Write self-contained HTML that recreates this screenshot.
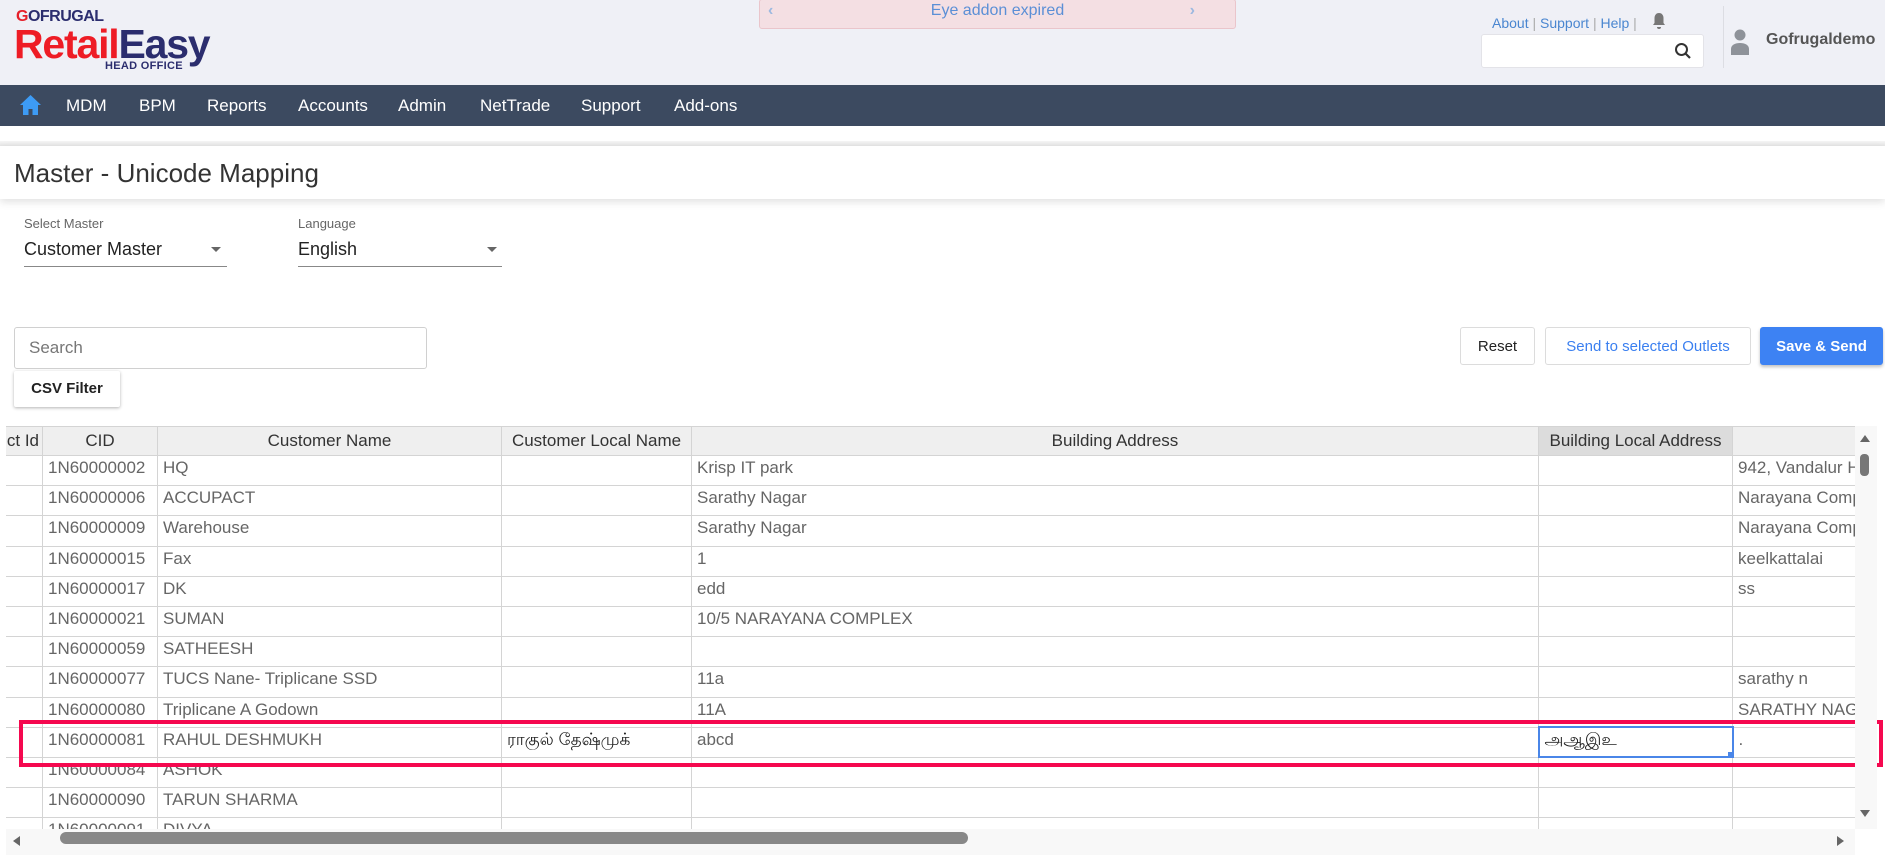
<!DOCTYPE html>
<html><head><meta charset="utf-8">
<style>
*{margin:0;padding:0;box-sizing:border-box}
body{width:1885px;height:855px;overflow:hidden;background:#fff;font-family:"Liberation Sans",sans-serif;position:relative;color:#333}
.abs{position:absolute}
#hdr{left:0;top:0;width:1885px;height:85px;background:#eff0f6}
#nav{left:0;top:85px;width:1885px;height:41px;background:#3c4a60}
.nv{position:absolute;top:96px;color:#fff;font-size:17px}
.tbl{position:absolute;left:6px;top:426px;width:1849px;height:403px;overflow:hidden}
table{border-collapse:collapse;table-layout:fixed;position:absolute;left:-30px;top:0;width:1916px}
td,th{border:1px solid #d4d4d4;height:30.2px;font-size:17px;color:#666;font-weight:normal;white-space:nowrap;overflow:hidden;padding:2px 5px 0 5px;vertical-align:top;text-align:left}
th{background:#efefef;color:#333;text-align:center;vertical-align:middle;height:29px;padding:0 4px}
.btn{position:absolute;top:327px;height:38px;border:1px solid #dcdcdc;border-radius:3px;background:#fff;font-size:15px;display:flex;align-items:center;justify-content:center}
</style></head><body>
<div id="hdr" class="abs"></div>
<div class="abs" style="left:16px;top:8px;font-size:16px;color:#2b2d6e;letter-spacing:-0.5px;font-weight:bold"><span style="color:#e5202a">G</span>OFRUGAL</div>
<div class="abs" style="left:14px;top:22px;font-size:41px;font-weight:bold;letter-spacing:-1.2px;line-height:44px"><span style="color:#ee1c25">Retail</span><span style="color:#2b2d6e">Easy</span></div>
<div class="abs" style="left:105px;top:60px;font-size:11px;font-weight:bold;color:#2b2d6e;letter-spacing:0.3px">HEAD OFFICE</div>
<div class="abs" style="left:759px;top:-1px;width:477px;height:30px;background:#f4dfe3;border:1px solid #eac5cb;border-radius:3px;text-align:center;font-size:16px;color:#5b8fd6;line-height:22px">Eye addon expired
<span class="abs" style="left:8px;top:0;color:#9bb8e0;font-weight:bold">&#8249;</span><span class="abs" style="right:40px;top:0;color:#9bb8e0;font-weight:bold">&#8250;</span></div>
<div class="abs" style="left:1492px;top:15px;font-size:14px;color:#4a86d0">About <span style="color:#aaa">|</span> Support <span style="color:#aaa">|</span> Help <span style="color:#aaa">|</span></div>
<svg class="abs" style="left:1652px;top:12px" width="14" height="18" viewBox="0 0 14 18"><path d="M7 1c-3 0-4.5 2.5-4.5 5v5L1 13h12l-1.5-2V6C11.5 3.5 10 1 7 1z M5 15a2 2 0 0 0 4 0z" fill="#777"/></svg>
<div class="abs" style="left:1481px;top:34px;width:223px;height:34px;background:#fff;border:1px solid #e3e3e8;border-radius:3px"></div>
<svg class="abs" style="left:1674px;top:42px" width="18" height="18" viewBox="0 0 18 18"><circle cx="7.5" cy="7.5" r="5.5" stroke="#333" stroke-width="2" fill="none"/><path d="M11.5 11.5L16 16" stroke="#333" stroke-width="2.2"/></svg>
<div class="abs" style="left:1723px;top:6px;width:1px;height:62px;background:#dcdde3"></div>
<svg class="abs" style="left:1730px;top:28px" width="20" height="28" viewBox="0 0 20 28"><circle cx="10" cy="7" r="5.5" fill="#8e9299"/><path d="M1 27v-6c0-4 4-6 9-6s9 2 9 6v6z" fill="#8e9299"/></svg>
<div class="abs" style="left:1766px;top:31px;font-size:16px;font-weight:bold;color:#555">Gofrugaldemo</div>

<div id="nav" class="abs"></div>
<svg class="abs" style="left:19px;top:94px" width="23" height="22" viewBox="0 0 23 22"><path d="M11.5 1L1 11h3v10h5.5v-6h4v6H19V11h3z" fill="#3d9bf5"/></svg>
<div class="nv" style="left:66px">MDM</div>
<div class="nv" style="left:139px">BPM</div>
<div class="nv" style="left:207px">Reports</div>
<div class="nv" style="left:298px">Accounts</div>
<div class="nv" style="left:398px">Admin</div>
<div class="nv" style="left:480px">NetTrade</div>
<div class="nv" style="left:581px">Support</div>
<div class="nv" style="left:674px">Add-ons</div>

<div class="abs" style="left:0;top:141px;width:1885px;height:6px;background:linear-gradient(#f5f5f5,#e3e3e3)"></div>
<div class="abs" style="left:0;top:146px;width:1885px;height:53px;background:#fff;box-shadow:0 3px 8px rgba(0,0,0,0.12)"></div>
<div class="abs" style="left:14px;top:158px;font-size:26px;color:#333">Master - Unicode Mapping</div>

<div class="abs" style="left:24px;top:216px;font-size:13px;color:#666">Select Master</div>
<div class="abs" style="left:24px;top:239px;font-size:18px;color:#222">Customer Master</div>
<div class="abs" style="left:211px;top:247px;border-left:5px solid transparent;border-right:5px solid transparent;border-top:5px solid #666"></div>
<div class="abs" style="left:24px;top:266px;width:203px;height:1px;background:#888"></div>
<div class="abs" style="left:298px;top:216px;font-size:13px;color:#666">Language</div>
<div class="abs" style="left:298px;top:239px;font-size:18px;color:#222">English</div>
<div class="abs" style="left:487px;top:247px;border-left:5px solid transparent;border-right:5px solid transparent;border-top:5px solid #666"></div>
<div class="abs" style="left:298px;top:266px;width:204px;height:1px;background:#888"></div>

<div class="abs" style="left:14px;top:327px;width:413px;height:42px;border:1px solid #d0d0d0;border-radius:3px;background:#fff;font-size:17px;color:#777;padding:10px 14px">Search</div>
<div class="abs" style="left:14px;top:371px;width:106px;height:36px;background:#fff;box-shadow:0 1px 3px rgba(0,0,0,0.3);border-radius:2px;font-size:15px;font-weight:bold;color:#222;text-align:center;line-height:36px">CSV Filter</div>

<div class="btn" style="left:1460px;width:75px;color:#222">Reset</div>
<div class="btn" style="left:1545px;width:206px;color:#3a7ff0">Send to selected Outlets</div>
<div class="btn" style="left:1760px;width:123px;background:#3d82f3;border-color:#3d82f3;color:#fff;font-weight:bold;box-shadow:0 2px 3px rgba(0,0,0,0.25)">Save &amp; Send</div>

<div class="tbl">
<table>
<colgroup><col style="width:66px"><col style="width:115px"><col style="width:344px"><col style="width:190px"><col style="width:847px"><col style="width:194px"><col style="width:160px"></colgroup>
<tr><th style="text-align:right;padding-right:3px">ct Id</th><th>CID</th><th>Customer Name</th><th>Customer Local Name</th><th>Building Address</th><th style="background:#dcdcdc">Building Local Address</th><th></th></tr>
<tr><td></td><td>1N60000002</td><td>HQ</td><td></td><td>Krisp IT park</td><td></td><td>942, Vandalur Highway</td></tr>
<tr><td></td><td>1N60000006</td><td>ACCUPACT</td><td></td><td>Sarathy Nagar</td><td></td><td>Narayana Complex</td></tr>
<tr><td></td><td>1N60000009</td><td>Warehouse</td><td></td><td>Sarathy Nagar</td><td></td><td>Narayana Complex</td></tr>
<tr><td></td><td>1N60000015</td><td>Fax</td><td></td><td>1</td><td></td><td>keelkattalai</td></tr>
<tr><td></td><td>1N60000017</td><td>DK</td><td></td><td>edd</td><td></td><td>ss</td></tr>
<tr><td></td><td>1N60000021</td><td>SUMAN</td><td></td><td>10/5 NARAYANA COMPLEX</td><td></td><td></td></tr>
<tr><td></td><td>1N60000059</td><td>SATHEESH</td><td></td><td></td><td></td><td></td></tr>
<tr><td></td><td>1N60000077</td><td>TUCS Nane- Triplicane SSD</td><td></td><td>11a</td><td></td><td>sarathy n</td></tr>
<tr><td></td><td>1N60000080</td><td>Triplicane A Godown</td><td></td><td>11A</td><td></td><td>SARATHY NAGAR</td></tr>
<tr><td></td><td>1N60000081</td><td>RAHUL DESHMUKH</td><td style="color:#222">ராகுல் தேஷ்முக்</td><td>abcd</td><td style="border:2px solid #4a86e8;color:#222">அஆஇஉ</td><td>.</td></tr>
<tr><td></td><td>1N60000084</td><td>ASHOK</td><td></td><td></td><td></td><td></td></tr>
<tr><td></td><td>1N60000090</td><td>TARUN SHARMA</td><td></td><td></td><td></td><td></td></tr>
<tr><td></td><td>1N60000091</td><td>DIVYA</td><td></td><td></td><td></td><td></td></tr>
</table>
</div>
<div class="abs" style="left:1728px;top:752px;width:6px;height:6px;background:#4a86e8"></div>
<div class="abs" style="left:19px;top:720px;width:1864px;height:47px;border:4px solid #f5084f"></div>

<div class="abs" style="left:1855px;top:426px;width:22px;height:403px;background:#f8f8f8"></div>
<div class="abs" style="left:1860px;top:435px;border-left:5px solid transparent;border-right:5px solid transparent;border-bottom:7px solid #666"></div>
<div class="abs" style="left:1860px;top:454px;width:9px;height:22px;background:#777;border-radius:4px"></div>
<div class="abs" style="left:1860px;top:810px;border-left:5px solid transparent;border-right:5px solid transparent;border-top:7px solid #666"></div>

<div class="abs" style="left:6px;top:829px;width:1849px;height:26px;background:#f8f8f8"></div>
<div class="abs" style="left:13px;top:836px;border-top:5px solid transparent;border-bottom:5px solid transparent;border-right:7px solid #666"></div>
<div class="abs" style="left:60px;top:832px;width:908px;height:12px;background:#888;border-radius:6px"></div>
<div class="abs" style="left:1837px;top:836px;border-top:5px solid transparent;border-bottom:5px solid transparent;border-left:7px solid #666"></div>
</body></html>
